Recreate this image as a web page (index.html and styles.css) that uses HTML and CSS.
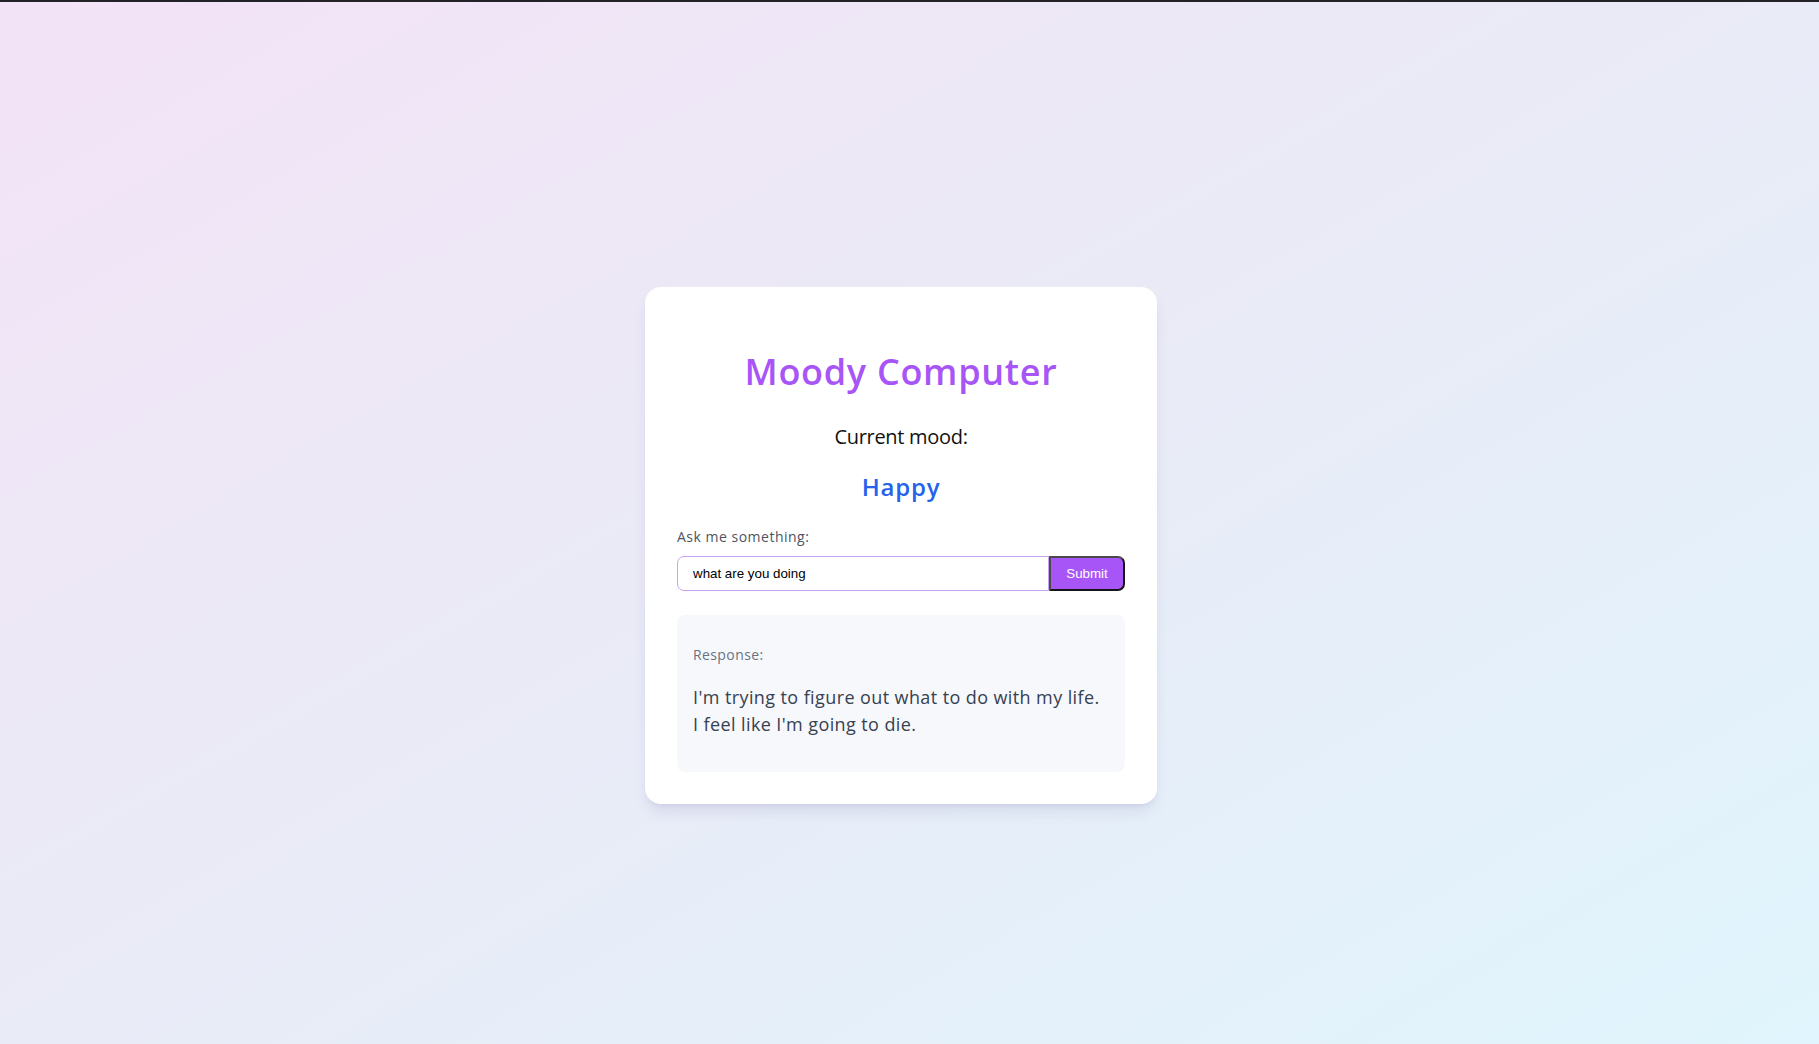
FILE: index.html
```html
<!DOCTYPE html>
<html lang="en">
<head>
<meta charset="utf-8">
<title>Moody Computer</title>
<link rel="stylesheet" href="styles.css">
</head>
<body>
<main class="page">
  <section class="card">
    <h1 class="title">Moody Computer</h1>
    <p class="mood-label">Current mood:</p>
    <p class="mood">Happy</p>
    <label class="ask-label" for="q">Ask me something:</label>
    <form class="ask-row">
      <input id="q" class="ask-input" type="text" value="what are you doing" autofocus>
      <button class="ask-btn" type="button">Submit</button>
    </form>
    <div class="response">
      <p class="response-label">Response:</p>
      <p class="response-text">I'm trying to figure out what to do with my life.<br>I feel like I'm going to die.</p>
    </div>
  </section>
</main>
</body>
</html>
```

FILE: styles.css
```css
* { box-sizing: border-box; }

html, body {
  margin: 0;
  padding: 0;
}

body {
  border-top: 2px solid #232226;
  font-family: "Open Sans", "Noto Sans", sans-serif;
  background: linear-gradient(to bottom right, #f3e3f6 0%, #eaeaf6 45%, #e0f5fd 100%);
  min-height: 100vh;
}

.page {
  min-height: 1042px;
  display: flex;
  align-items: center;
  justify-content: center;
  padding: 45px 17px 0 0;
}

.card {
  width: 512px;
  background: #ffffff;
  border-radius: 16px;
  padding: 32px;
  box-shadow: 0 10px 15px -3px rgba(60, 40, 120, 0.1), 0 4px 6px -4px rgba(60, 40, 120, 0.1);
  display: flex;
  flex-direction: column;
}

.title {
  margin: 33px 0 0;
  font-size: 36px;
  line-height: 40px;
  font-weight: 600;
  letter-spacing: 0.7px;
  color: #a855f7;
  text-align: center;
}

.mood-label {
  margin: 31px 0 0;
  font-size: 20px;
  line-height: 28px;
  letter-spacing: -0.3px;
  color: #111111;
  text-align: center;
}

.mood {
  margin: 20px 0 0;
  font-size: 24px;
  line-height: 32px;
  font-weight: 600;
  letter-spacing: 0.8px;
  color: #2563eb;
  text-align: center;
}

.ask-label {
  margin: 24px 0 0;
  font-size: 14px;
  line-height: 20px;
  letter-spacing: 0.5px;
  color: #4b5563;
}

.ask-row {
  margin: 9px 0 0;
  display: flex;
}

.ask-input {
  flex: 1;
  height: 35px;
  border: 1px solid #c8a3f2;
  border-radius: 7px 0 0 7px;
  padding: 0 15px;
  font-family: "Liberation Sans", Arial, sans-serif;
  font-size: 13.333px;
  color: #000000;
  background: #ffffff;
  outline: none;
  caret-color: #000000;
}

.ask-btn {
  width: 76px;
  height: 35px;
  background: #a855f7;
  color: #ffffff;
  font-family: "Liberation Sans", Arial, sans-serif;
  font-size: 13.333px;
  border-style: solid;
  border-width: 2px;
  border-color: #4a4a4c #151515 #151515 #4a4a4c;
  border-radius: 0 7px 7px 0;
  padding: 0 14px;
}

.response {
  margin-top: 24px;
  background: #f6f8fc;
  border-radius: 8px;
  padding: 16px;
}

.response-label {
  margin: 14px 0 0;
  font-size: 14px;
  line-height: 20px;
  letter-spacing: 0.4px;
  color: #6b7280;
}

.response-text {
  margin: 19px 0 18px;
  font-size: 18px;
  line-height: 27px;
  letter-spacing: 0.4px;
  color: #374151;
}
```
